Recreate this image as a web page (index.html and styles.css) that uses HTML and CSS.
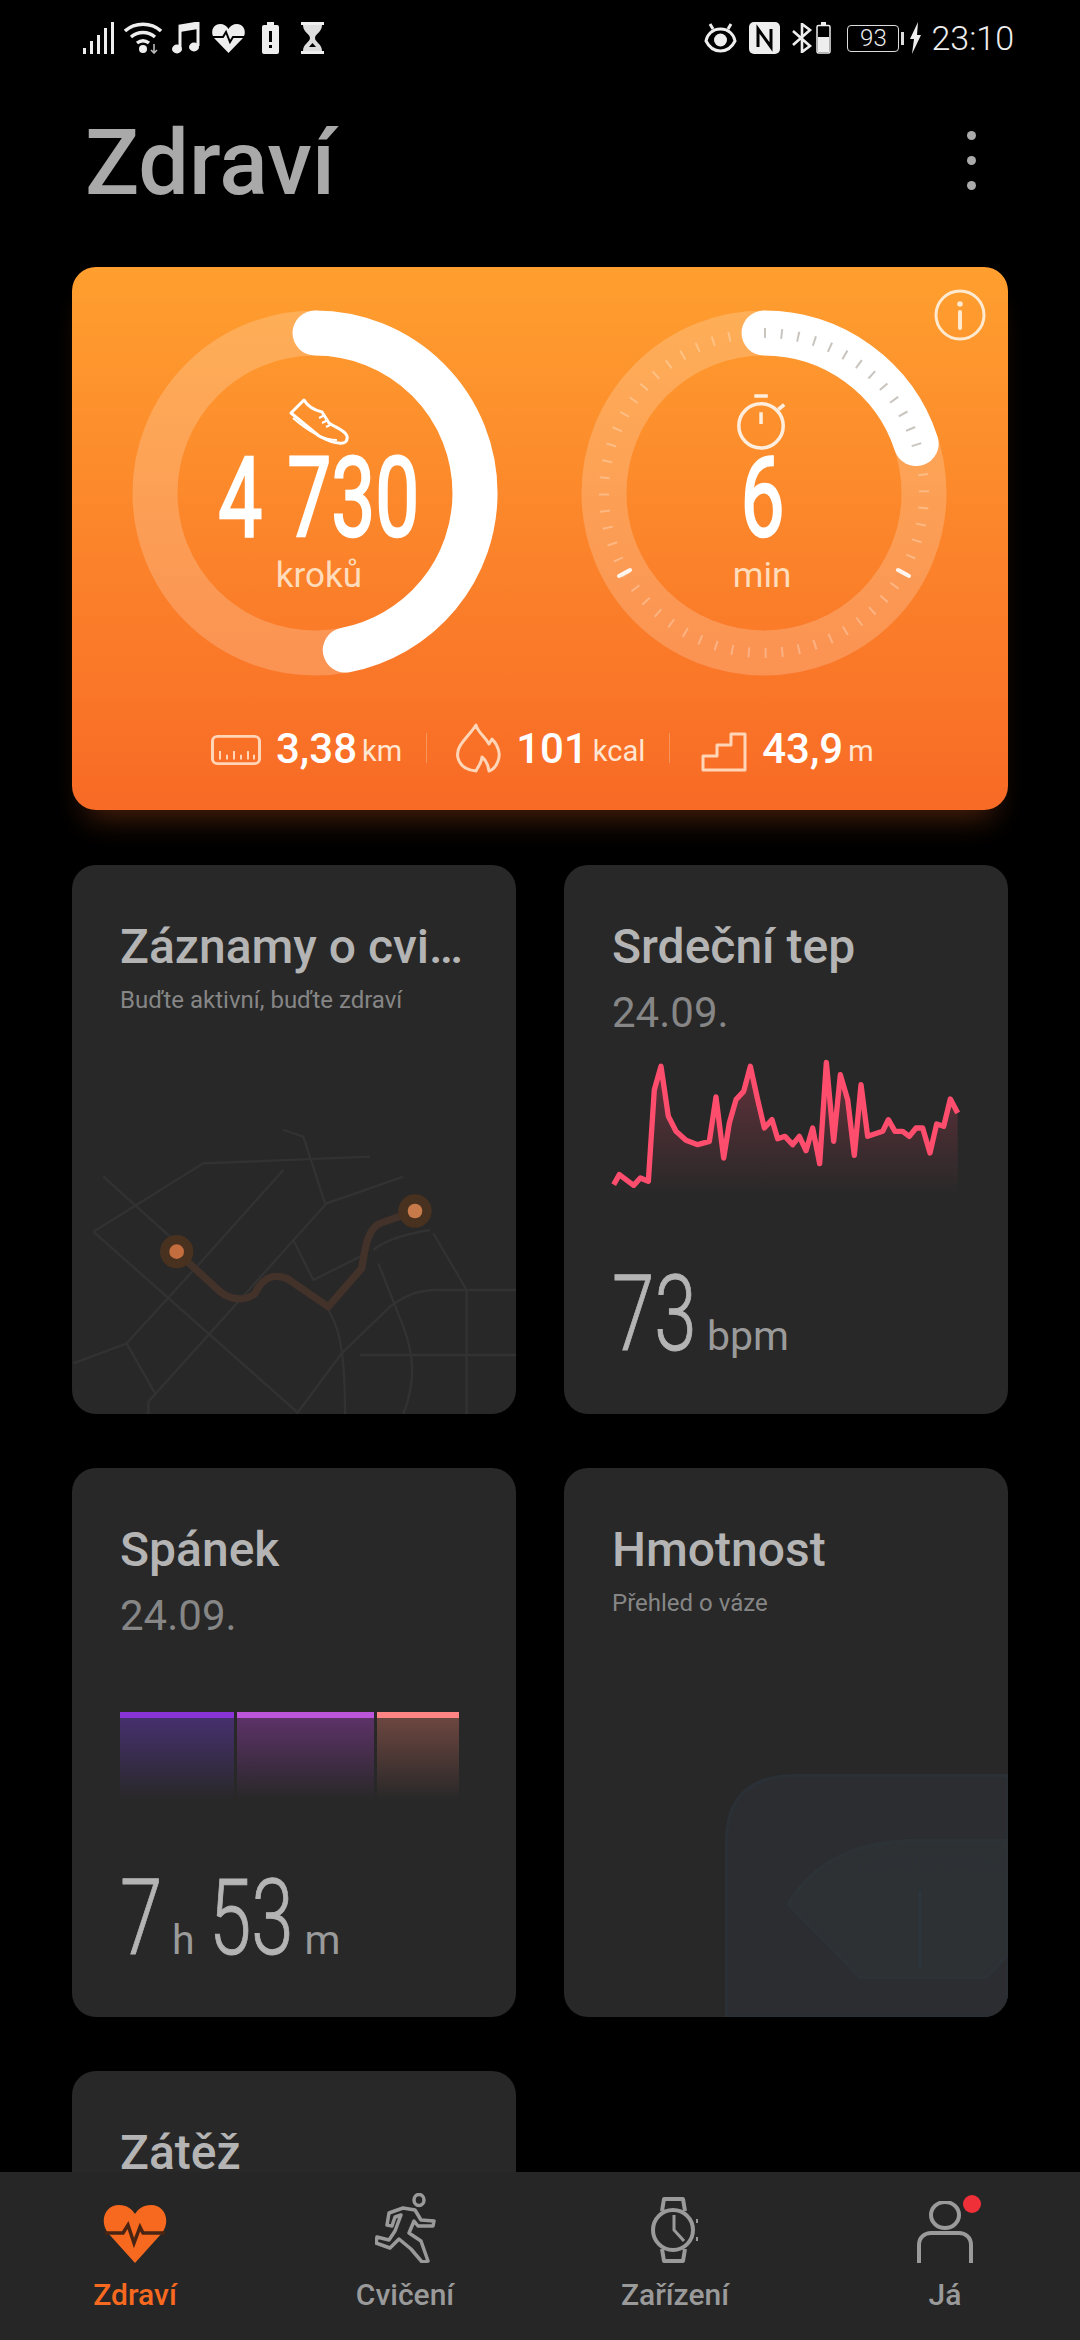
FILE: index.html
```html
<!DOCTYPE html>
<html lang="cs">
<head>
    <meta charset="UTF-8">
    <title>Zdraví</title>
    <link rel="stylesheet" href="styles.css">
</head>
<body>
<div class="page">

    <!-- Status bar -->
    <div class="status">
        <div class="status-group">
            <svg class="st" width="33" height="32" viewBox="0 0 33 32"><path d="M0 26h3v6H0zM7 19h3v13H7zM14 13h3v19h-3zM21 6h3v26h-3zM28 0h3v32h-3z" fill="#eee"/></svg>
            <svg class="st st-wifi" width="38" height="32" viewBox="0 0 38 32"><path d="M1 9C11 0 27 0 37 9M7 15c7-6 17-6 24 0M13 21c4-3 8-3 12 0" fill="none" stroke="#eee" stroke-width="3.4"/><circle cx="19" cy="27" r="4" fill="#eee"/><path d="M30 22v9m-3-3l3 3 3-3" fill="none" stroke="#bbb" stroke-width="1.6"/></svg>
            <svg class="st st-music" width="28" height="32" viewBox="0 0 28 32"><path d="M8 26V4l18-3v23" fill="none" stroke="#eee" stroke-width="3"/><path d="M8 4l18-3v6L8 10z" fill="#eee"/><ellipse cx="5" cy="27" rx="5" ry="4.4" fill="#eee"/><ellipse cx="22" cy="25" rx="5" ry="4.4" fill="#eee"/></svg>
            <svg class="st st-heart" width="33" height="30" viewBox="0 0 33 30"><path d="M16.500 30L2 15C-2 9 1 1 8 1c4 0 7 2 8.500 5C18 3 21 1 25 1c7 0 10 8 6 14z" fill="#eee"/><path d="M1 14h10l3-5 4 10 3-5h11" fill="none" stroke="#000" stroke-width="2"/></svg>
            <svg class="st st-batt" width="17" height="32" viewBox="0 0 17 32"><path d="M5 0h7v3H5z" fill="#eee"/><rect y="3" width="17" height="29" rx="2" fill="#eee"/><path d="M7 9h3v11H7zM7 23h3v3H7z" fill="#000"/></svg>
            <svg class="st st-glass" width="25" height="32" viewBox="0 0 25 32"><path d="M1 0h23v3H1zM1 29h23v3H1z" fill="#eee"/><path d="M3 3h19c0 7-7 9-7 13s7 6 7 13H3c0-7 7-9 7-13S3 10 3 3z" fill="#ddd"/><path d="M9 25l3.500-4 3.500 4z" fill="#000"/></svg>
        </div>
        <div class="status-group">
            <svg class="st" width="33" height="30" viewBox="0 0 33 30"><path d="M16.500 6C25 6 30 12 31 18c-3 6-8 10-14.500 10S5 24 2 18C3 12 8 6 16.500 6z" fill="none" stroke="#eee" stroke-width="3"/><circle cx="16.500" cy="17" r="6.500" fill="#eee"/><path d="M6 1l3 5M27 1l-3 5" stroke="#eee" stroke-width="3"/></svg>
            <svg class="st st-nfc" width="31" height="32" viewBox="0 0 31 32"><rect width="31" height="32" rx="5" fill="#eee"/><path d="M9 25V7l13 18V7" fill="none" stroke="#000" stroke-width="3"/></svg>
            <svg class="st st-bt" width="22" height="30" viewBox="0 0 22 30"><path d="M2 8l17 15-8 6V1l8 6L2 22" fill="none" stroke="#eee" stroke-width="2.600"/></svg>
            <svg class="st st-mini" width="15" height="32" viewBox="0 0 15 32"><path d="M5 0h5v3H5z" fill="#eee"/><rect x="1" y="3.500" width="13" height="27.500" rx="1.500" fill="none" stroke="#eee" stroke-width="1.500"/><rect x="2" y="15" width="11" height="15" fill="#eee"/></svg>
            <div class="level">93</div>
            <div class="level-tip"></div>
            <svg class="st st-bolt" width="13" height="32" viewBox="0 0 13 32"><path d="M9 0L1 17h4L3 32l9-19H8z" fill="#eee"/></svg>
            <span class="clock">23:10</span>
        </div>
    </div>

    <!-- Title -->
    <div class="header">
        <h1>Zdraví</h1>
        <div class="menu"><i></i><i></i><i></i></div>
    </div>

    <div class="content">

        <!-- Activity card -->
        <section class="hero">
            <svg class="info" width="52" height="52" viewBox="0 0 52 52"><circle cx="26" cy="26" r="24" fill="none" stroke="#ffe9cf" stroke-width="3"/><circle cx="26" cy="15" r="2.800" fill="#ffe9cf"/><path d="M26 23v16" stroke="#ffe9cf" stroke-width="4" stroke-linecap="round"/></svg>

            <div class="rings">
                <div class="ring">
                    <svg class="ring-art" width="366" height="366" viewBox="0 0 366 366">
                        <circle cx="183" cy="183" r="160" fill="none" stroke="#fff" stroke-opacity=".2" stroke-width="45"/>
                        <circle cx="183" cy="183" r="160" fill="none" stroke="#fff" stroke-width="45" stroke-linecap="round" stroke-dasharray="472 1005.300" transform="rotate(-90 183 183)"/>
                    </svg>
                    <div class="ring-text ring-text-steps">
                        <svg class="ring-icon" width="60" height="48" viewBox="0 0 60 48"><path d="M2 15L15 2c4 7 10 10 18 12l7 11c7 5 16 7 18 13 1 5-2 8-8 7-8 0-14-4-20-7z" fill="none" stroke="#fff" stroke-width="3" stroke-linejoin="round"/><path d="M4 20c8 7 26 22 44 22M30 20l6-3M33 25l6-3M37 29l6-3" fill="none" stroke="#fff" stroke-width="2"/></svg>
                        <div class="big-num"><span>4 730</span></div>
                        <div class="ring-label">kroků</div>
                    </div>
                </div>
                <div class="ring">
                    <svg class="ring-art" width="366" height="366" viewBox="0 0 366 366">
                        <circle cx="183" cy="183" r="160" fill="none" stroke="#fff" stroke-opacity=".2" stroke-width="45"/>
                        <circle cx="183" cy="183" r="160" fill="none" stroke="#fff" stroke-opacity=".28" stroke-width="10" stroke-dasharray="2 14.755" transform="rotate(-91 183 183)"/>
                        <circle cx="183" cy="183" r="160" fill="none" stroke="#fff" stroke-width="45" stroke-linecap="round" stroke-dasharray="201 1005.300" transform="rotate(-90 183 183)"/>
                        <circle cx="183" cy="183" r="160" fill="none" stroke="#c9c4be" stroke-width="10" stroke-dasharray="2 14.755 2 14.755 2 14.755 2 14.755 2 14.755 2 14.755 2 14.755 2 14.755 2 14.755 2 14.755 2 14.755 2 14.755 2 1000" transform="rotate(-90 183 183)"/>
                        <path d="M328 266l-11-6M38 266l11-6" stroke="#fff" stroke-width="4" stroke-linecap="round" stroke-opacity=".9"/>
                    </svg>
                    <div class="ring-text ring-text-time">
                        <svg class="ring-icon" width="52" height="58" viewBox="0 0 52 58"><circle cx="25" cy="33" r="23" fill="none" stroke="#ffeedd" stroke-width="3.600"/><path d="M18 2h14M25 19v12" stroke="#ffeedd" stroke-width="3.600"/><path d="M43 16l6-5" stroke="#ffeedd" stroke-width="4"/></svg>
                        <div class="big-num"><span>6</span></div>
                        <div class="ring-label">min</div>
                    </div>
                </div>
            </div>

            <div class="stats">
                <svg class="stat-ruler" width="50" height="30" viewBox="0 0 50 32" preserveAspectRatio="none"><rect x="1.500" y="1.500" width="47" height="29" rx="5" fill="none" stroke="#ffd5b8" stroke-width="3"/><path d="M9 17v9M16 21v5M23 17v9M30 21v5M37 17v9M43 21v5" stroke="#ffd5b8" stroke-width="2"/></svg>
                <b class="stat-val">3,38</b><span class="stat-unit">km</span>
                <i class="stat-sep"></i>
                <svg class="stat-flame" width="46" height="50" viewBox="0 0 46 50"><path d="M21 2c2 8 9 11 13 19l3-5c6 6 9 15 6 22-2 6-6 9-9 10-1-7-3-11-7-14 0 5-3 8-6 14C11 47 5 43 3 35 0 23 12 16 21 2z" fill="none" stroke="#ffd5b8" stroke-width="3" stroke-linejoin="round"/></svg>
                <b class="stat-val">101</b><span class="stat-unit">kcal</span>
                <i class="stat-sep"></i>
                <svg class="stat-stairs" width="46" height="40" viewBox="0 0 46 40"><path d="M2 38V24h14V13h14V2h14v36z" fill="none" stroke="#ffd5b8" stroke-width="3" stroke-linejoin="round"/></svg>
                <b class="stat-val">43,9</b><span class="stat-unit">m</span>
            </div>
        </section>

        <!-- Tiles -->
        <div class="tiles">
            <section class="tile">
                <h2>Záznamy o cvi…</h2>
                <p class="tile-note">Buďte aktivní, buďte zdraví</p>
                <svg class="map" width="444" height="334" viewBox="6 0 1332 1002">
                    <g fill="none" stroke="#323232" stroke-width="7">
                        <path d="M70 455L400 250 900 230M70 455L680 995M100 290L300 470M10 850L170 790 255 940M170 790L380 560 640 270"/>
                        <path d="M235 1002V965L770 370 1000 290M640 150L700 170 765 370M670 480L730 600 870 530M910 510C950 475 1020 460 1080 450"/>
                        <path d="M925 550L1000 740C1030 820 1040 900 1000 1002M770 680C800 730 825 780 825 1002M680 1002L815 820 960 680C1000 650 1040 630 1100 630H1338M870 825H1338M1190 630V1002M1090 460L1190 630"/>
                    </g>
                    <path d="M320 515L450 635C480 660 530 665 555 640 580 590 610 580 650 595L775 680 875 565C885 510 890 450 930 430L1035 393" fill="none" stroke="#43322a" stroke-width="22" stroke-linejoin="round"/>
                    <circle cx="320" cy="515" r="50" fill="#48321f"/><circle cx="320" cy="515" r="22" fill="#c46e40"/>
                    <circle cx="1035" cy="393" r="50" fill="#48321f"/><circle cx="1035" cy="393" r="22" fill="#c87a4a"/>
                </svg>
            </section>

            <section class="tile">
                <h2>Srdeční tep</h2>
                <p class="tile-date">24.09.</p>
                <svg class="pulse" width="400" height="200" viewBox="0 0 1200 600">
                    <defs>
                        <linearGradient id="pulseFill" x1="0" y1="0" x2="0" y2="1">
                            <stop offset="0" stop-color="#ff4d6d" stop-opacity=".28"/>
                            <stop offset="1" stop-color="#ff4d6d" stop-opacity="0"/>
                        </linearGradient>
                    </defs>
                    <path d="M68 485L85 455 105 470 128 487 148 465 172 475 190 200 210 130 232 280 255 325 285 352 320 365 355 355 375 222 398 405 415 300 435 230 458 205 478 130 500 230 520 315 543 290 560 347 582 340 605 365 625 340 645 383 665 315 686 422 706 118 728 355 748 155 770 230 790 397 810 185 830 340 875 325 892 290 912 325 935 325 955 340 975 315 995 315 1017 390 1037 303 1058 310 1078 228 1100 270V520H68Z" fill="url(#pulseFill)"/>
                    <path d="M68 485L85 455 105 470 128 487 148 465 172 475 190 200 210 130 232 280 255 325 285 352 320 365 355 355 375 222 398 405 415 300 435 230 458 205 478 130 500 230 520 315 543 290 560 347 582 340 605 365 625 340 645 383 665 315 686 422 706 118 728 355 748 155 770 230 790 397 810 185 830 340 875 325 892 290 912 325 935 325 955 340 975 315 995 315 1017 390 1037 303 1058 310 1078 228 1100 270" fill="none" stroke="#ff4d6d" stroke-width="16" stroke-linejoin="round"/>
                </svg>
                <div class="reading reading-heart">
                    <span class="thin-num num-two">73</span><span class="thin-unit">bpm</span>
                </div>
            </section>

            <section class="tile">
                <h2>Spánek</h2>
                <p class="tile-date">24.09.</p>
                <div class="sleep">
                    <div class="sleep-bar deep"></div>
                    <div class="sleep-bar light"></div>
                    <div class="sleep-bar rem"></div>
                </div>
                <div class="reading reading-sleep">
                    <span class="thin-num num-one">7</span><span class="thin-unit unit-h">h</span>
                    <span class="thin-num num-two">53</span><span class="thin-unit unit-m">m</span>
                </div>
            </section>

            <section class="tile">
                <h2>Hmotnost</h2>
                <p class="tile-note">Přehled o váze</p>
                <svg class="scale" width="283" height="243" viewBox="75 130 849 729">
                    <path d="M80 859V330Q80 135 290 135H924V859Z" fill="#2b2d30" stroke="#2a3036" stroke-width="10"/>
                    <path d="M265 520Q380 330 650 330H924V670L860 740H480Z" fill="#2e3134" stroke="#2c3236" stroke-width="12"/>
                    <path d="M480 415Q680 370 900 410" fill="none" stroke="#2a3238" stroke-width="30" stroke-dasharray="4 10"/>
                    <path d="M660 480V710" stroke="#2b363e" stroke-width="8"/>
                </svg>
            </section>

            <section class="tile">
                <h2>Zátěž</h2>
            </section>
        </div>
    </div>

    <!-- Bottom navigation -->
    <nav class="tabs">
        <div class="tab active">
            <svg width="64" height="58" viewBox="0 0 64 58"><path d="M32 58L5 28C-4 16 2 0 16 0c8 0 13 4 16 9 3-5 8-9 16-9 14 0 20 16 11 28z" fill="#f7691f"/><path d="M2 28h18l5-8 6 18 6-16 3 6h22" fill="none" stroke="#4a2412" stroke-width="3.500"/></svg>
            <span>Zdraví</span>
        </div>
        <div class="tab">
            <svg width="61" height="70" viewBox="0 0 61 70"><ellipse cx="44" cy="7" rx="5" ry="5.500" fill="none" stroke="#9a9a9a" stroke-width="3.500"/><path d="M28 15L14 20 12 32 17 33 20 24 26 22 20 38 14 47 2 44 1 50 15 55 24 46 36 56 47 69 53 68 46 48 34 40 39 28 43 33 58 33 59 28 46 27 40 17Z" fill="none" stroke="#9a9a9a" stroke-width="3.500" stroke-linejoin="round"/></svg>
            <span>Cvičení</span>
        </div>
        <div class="tab">
            <svg width="48" height="66" viewBox="0 0 48 66"><circle cx="22" cy="33" r="20" fill="none" stroke="#9a9a9a" stroke-width="4"/><path d="M11 14L13 2H32L34 14M11 52L13 64H32L34 52" fill="none" stroke="#9a9a9a" stroke-width="4" stroke-linejoin="round"/><path d="M23 18V33L33 44" fill="none" stroke="#9a9a9a" stroke-width="3"/><path d="M46 22v4M46 40v4" stroke="#9a9a9a" stroke-width="2"/></svg>
            <span>Zařízení</span>
        </div>
        <div class="tab">
            <div class="tab-person">
                <svg width="56" height="62" viewBox="0 0 56 62"><ellipse cx="28" cy="14" rx="14" ry="13" fill="none" stroke="#9a9a9a" stroke-width="4"/><path d="M2 62V44C2 36 8 32 14 32H42C48 32 54 36 54 44V62" fill="none" stroke="#9a9a9a" stroke-width="4"/></svg>
                <i class="badge"></i>
            </div>
            <span>Já</span>
        </div>
    </nav>
</div>
</body>
</html>
```

FILE: styles.css
```css
html, body {
    margin: 0;
    padding: 0;
    background: #000;
}
.page {
    display: flex;
    flex-direction: column;
    width: 1080px;
    height: 2340px;
    overflow: hidden;
    font-family: Roboto, "Noto Sans", sans-serif;
    color: #b4b4b4;
}

/* status bar */
.status {
    display: flex;
    justify-content: space-between;
    align-items: center;
    height: 32px;
    padding: 22px 66px 0 83px;
    flex: none;
}
.status-group {
    display: flex;
    align-items: center;
}
.st { flex: none; }
.st-wifi { margin-left: 8px; }
.st-music { margin-left: 10px; }
.st-heart { margin-left: 12px; }
.st-batt { margin-left: 17px; }
.st-glass { margin-left: 21px; }
.st-nfc { margin-left: 12px; }
.st-bt { margin-left: 11px; }
.st-mini { margin-left: 3px; }
.level {
    width: 50px;
    height: 25px;
    margin-left: 16px;
    border: 1px solid #ddd;
    border-radius: 4px;
    font-size: 24px;
    line-height: 25px;
    font-weight: 300;
    text-align: center;
    color: #eee;
}
.level-tip {
    width: 3px;
    height: 13px;
    margin-left: 2px;
    background: #ddd;
}
.st-bolt { margin-left: 5px; }
.clock {
    margin-left: 9px;
    font-size: 34px;
    font-weight: 300;
    color: #eee;
}

/* title */
.header {
    display: flex;
    justify-content: space-between;
    align-items: center;
    height: 213px;
    padding: 0 104px 0 85px;
    flex: none;
    box-sizing: border-box;
}
h1 {
    margin: 6px 0 0;
    font-size: 90px;
    font-weight: 500;
    color: #a9a9a9;
}
.menu {
    display: flex;
    flex-direction: column;
    gap: 16px;
}
.menu i {
    width: 9px;
    height: 9px;
    border-radius: 50%;
    background: #aaa;
}

.content {
    flex: 1;
    min-height: 0;
    overflow: hidden;
    padding: 0 72px;
}

/* activity card */
.hero {
    position: relative;
    height: 543px;
    box-sizing: border-box;
    padding: 43px 0 0 60px;
    border-radius: 24px;
    background: linear-gradient(#ff9f2f, #f86a26);
    box-shadow: 0 22px 30px -14px rgba(248, 106, 38, .3);
}
.info {
    position: absolute;
    top: 22px;
    right: 22px;
}
.rings {
    display: flex;
    gap: 83px;
}
.ring {
    display: grid;
    width: 366px;
    height: 366px;
}
.ring-art, .ring-text { grid-area: 1 / 1; }
.ring-text {
    display: flex;
    flex-direction: column;
    align-items: center;
    color: #fff;
}
.ring-text-steps { padding-left: 8px; }
.ring-text-time { padding-right: 4px; }
.ring-icon {
    height: 56px;
    margin-top: 84px;
}
.big-num {
    height: 80px;
    margin-top: 8px;
    font-size: 112px;
    line-height: 80px;
    font-weight: 400;
    word-spacing: 8px;
    white-space: nowrap;
    -webkit-text-stroke: 2.5px #fff;
}
.big-num span {
    display: inline-block;
    transform: scaleX(.7);
}
.ring-label {
    margin-top: 18px;
    font-size: 35px;
    line-height: 40px;
    color: #ffdcbc;
}

.stats {
    display: flex;
    align-items: center;
    height: 50px;
    margin: 47px 0 0 79px;
}
.stat-val {
    margin-left: 15px;
    font-size: 42px;
    font-weight: 500;
    color: #fff;
}
.stat-unit {
    margin: 6px 0 0 5px;
    font-size: 29px;
    color: #ffe6d2;
}
.stat-sep {
    width: 1px;
    height: 30px;
    margin: 0 28px 0 24px;
    background: rgba(255, 255, 255, .25);
}
.stat-stairs { margin: 8px 0 0 3px; }
.stat-ruler { margin-top: 4px; }

/* tiles */
.tiles {
    display: grid;
    grid-template-columns: 444px 444px;
    grid-auto-rows: 549px;
    gap: 54px 48px;
    margin-top: 55px;
}
.tile {
    position: relative;
    display: flex;
    flex-direction: column;
    overflow: hidden;
    padding: 54px 0 0 48px;
    border-radius: 24px;
    background: #282828;
}
h2 {
    margin: 0;
    height: 56px;
    font-size: 48px;
    line-height: 56px;
    font-weight: 500;
    color: #b4b4b4;
}
.tile-note {
    margin: 10px 0 0;
    font-size: 24px;
    line-height: 30px;
    color: #868686;
}
.tile-date {
    margin: 14px 0 0;
    font-size: 42px;
    line-height: 48px;
    color: #868686;
}
.map {
    position: absolute;
    left: 0;
    bottom: 0;
}
.pulse {
    margin: -14px 0 0 -21px;
}
.reading {
    display: flex;
    align-items: baseline;
}
.reading-heart { margin-top: 51px; }
.reading-sleep { margin-top: 78px; }
.thin-num {
    display: inline-block;
    font-size: 106px;
    line-height: 80px;
    font-weight: 300;
    -webkit-text-stroke: 1px #b4b4b4;
    color: #b4b4b4;
    transform: scaleX(.72);
    transform-origin: left;
}
.num-one { width: 44px; }
.num-two { width: 84px; }
.thin-unit {
    margin-left: 11px;
    font-size: 41px;
    color: #9a9a9a;
}
.unit-h { margin: 0 14px 0 8px; }
.unit-m { margin-left: 12px; }

.sleep {
    display: flex;
    gap: 3px;
    height: 88px;
    margin-top: 72px;
}
.sleep-bar { border-top: 6px solid; }
.deep {
    width: 114px;
    border-color: #8a33d6;
    background: linear-gradient(#46306e, #282828);
}
.light {
    width: 137px;
    border-color: #bb55d9;
    background: linear-gradient(#5c3267, #282828);
}
.rem {
    width: 82px;
    border-color: #ff8585;
    background: linear-gradient(#6c4640, #282828);
}
.scale {
    position: absolute;
    right: 0;
    bottom: 0;
}

/* bottom navigation */
.tabs {
    display: grid;
    grid-template-columns: repeat(4, 1fr);
    height: 168px;
    flex: none;
    background: #262626;
}
.tab {
    display: flex;
    flex-direction: column;
    align-items: center;
    justify-content: flex-end;
    height: 141px;
    font-size: 30px;
    line-height: 36px;
    font-weight: 500;
    color: #9a9a9a;
}
.tab svg { display: block; }
.tab span { margin-top: 14px; }
.tab.active { color: #f7691f; }
.tab-person { position: relative; }
.badge {
    position: absolute;
    top: -6px;
    right: -8px;
    width: 18px;
    height: 18px;
    border-radius: 50%;
    background: #f03038;
}
```
